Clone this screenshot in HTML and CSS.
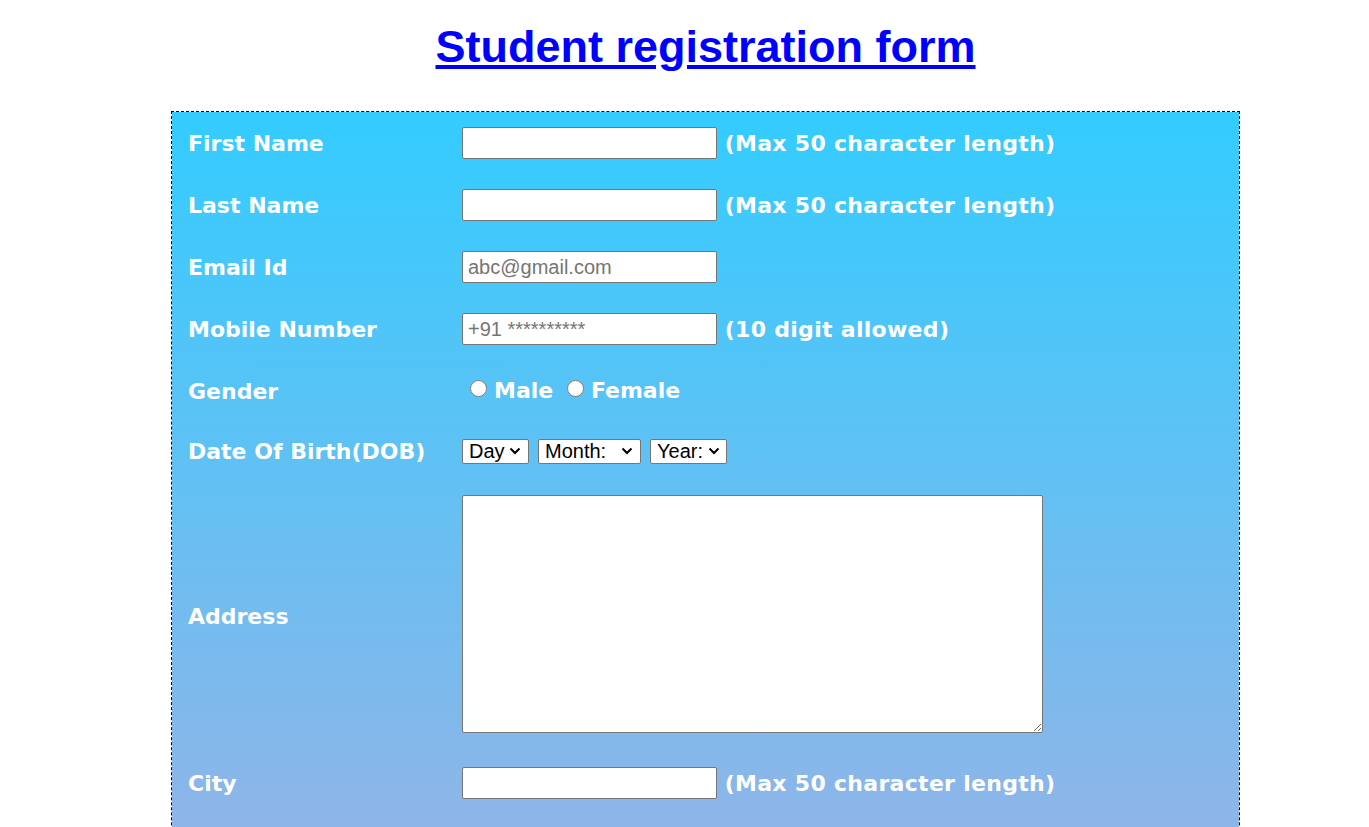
FILE: index.html
```html
<!DOCTYPE html>
<html>
<head>
<meta charset="utf-8">
<title>Student registration form</title>
<link rel="stylesheet" href="styles.css">
</head>
<body>
<div class="page">
  <h1 class="title">Student registration form</h1>
  <table class="form-table">
    <tr>
      <td class="label">First Name</td>
      <td class="field"><input class="text" type="text"> <span class="note">(Max 50 character length)</span></td>
    </tr>
    <tr>
      <td class="label">Last Name</td>
      <td class="field"><input class="text" type="text"> <span class="note">(Max 50 character length)</span></td>
    </tr>
    <tr>
      <td class="label">Email Id</td>
      <td class="field"><input class="text" type="text" placeholder="abc@gmail.com"></td>
    </tr>
    <tr>
      <td class="label">Mobile Number</td>
      <td class="field"><input class="text" type="text" placeholder="+91 **********"> <span class="note">(10 digit allowed)</span></td>
    </tr>
    <tr class="row-choice">
      <td class="label">Gender</td>
      <td class="field"><label class="radio"><input type="radio" name="g">Male</label> <label class="radio radio-2"><input type="radio" name="g">Female</label></td>
    </tr>
    <tr class="row-dob">
      <td class="label">Date Of Birth(DOB)</td>
      <td class="field"><div class="selects">
        <select class="sel sel-day"><option>Day</option></select>
        <select class="sel sel-month"><option>Month:</option></select>
        <select class="sel sel-year"><option>Year:</option></select>
      </div></td>
    </tr>
    <tr>
      <td class="label">Address</td>
      <td class="field"><textarea class="area"></textarea></td>
    </tr>
    <tr>
      <td class="label">City</td>
      <td class="field"><input class="text" type="text"> <span class="note">(Max 50 character length)</span></td>
    </tr>
    <tr>
      <td class="label">Pin Code</td>
      <td class="field"><input class="text" type="text"> <span class="note">(6 digit number)</span></td>
    </tr>
    <tr>
      <td class="label">State</td>
      <td class="field"><input class="text" type="text"> <span class="note">(Max 50 character length)</span></td>
    </tr>
    <tr>
      <td class="label">Country</td>
      <td class="field"><input class="text" type="text"></td>
    </tr>
    <tr class="row-choice">
      <td class="label">Hobbies</td>
      <td class="field"><label class="radio"><input type="checkbox">Drawing</label> <label class="radio radio-2"><input type="checkbox">Singing</label> <label class="radio radio-2"><input type="checkbox">Dancing</label></td>
    </tr>
    <tr class="row-choice">
      <td class="label">Courses Applied For</td>
      <td class="field"><label class="radio"><input type="radio" name="c">BCA</label> <label class="radio radio-2"><input type="radio" name="c">B.Com</label> <label class="radio radio-2"><input type="radio" name="c">B.Sc</label> <label class="radio radio-2"><input type="radio" name="c">B.A</label></td>
    </tr>
    <tr>
      <td class="buttons" colspan="2"><input type="submit" value="Submit"> <input type="reset" value="Reset"></td>
    </tr>
  </table>
</div>
</body>
</html>
```
FILE: styles.css
```css
html, body {
  margin: 0;
  padding: 0;
  background: #ffffff;
}

.page {
  padding-left: 42px;
  padding-bottom: 40px;
}

.title {
  margin: 0;
  padding-top: 21px;
  height: 111px;
  box-sizing: border-box;
  text-align: center;
  font-family: "Liberation Sans", Arial, sans-serif;
  font-size: 45px;
  font-weight: bold;
  color: #0000ff;
  text-decoration: underline;
  line-height: 52px;
}

.form-table {
  width: 1069px;
  margin: 0 auto;
  border: 1px dashed #000000;
  border-spacing: 0;
  background: linear-gradient(#33ccff 0px, #ff99cc 1590px);
  background-repeat: no-repeat;
}

.label {
  width: 259px;
  padding: 15px 0 15px 16px;
  font-family: Verdana, "DejaVu Sans", sans-serif;
  font-size: 22px;
  font-weight: bold;
  color: #ffffff;
  white-space: nowrap;
}

.field {
  padding: 15px 15px;
  font-family: Verdana, "DejaVu Sans", sans-serif;
  font-size: 22px;
  font-weight: bold;
  color: #ffffff;
}

.row-choice .field {
  line-height: 32px;
}

.text {
  width: 255px;
  height: 32px;
  box-sizing: border-box;
  border: 1px solid #767676;
  border-radius: 2px;
  padding: 1px 5px;
  font-family: "Liberation Sans", Arial, sans-serif;
  font-size: 20px;
  vertical-align: middle;
}

.text::placeholder {
  color: #757575;
}

.note {
  vertical-align: middle;
  letter-spacing: 0.3px;
}

.radio input {
  margin: 0 7px 0 8px;
  width: 17px;
  height: 17px;
  vertical-align: 1px;
}

.radio-2 input {
  margin-left: 6px;
}

.selects {
  display: flex;
  align-items: center;
  gap: 9px;
  height: 28px;
}

.sel {
  appearance: none;
  -webkit-appearance: none;
  height: 25px;
  box-sizing: border-box;
  font-family: "Liberation Sans", Arial, sans-serif;
  font-size: 20px;
  line-height: 23px;
  color: #000000;
  border: 1px solid #767676;
  border-radius: 2px;
  background-color: #ffffff;
  background-image: url("data:image/svg+xml,%3Csvg xmlns='http://www.w3.org/2000/svg' width='12' height='8' viewBox='0 0 12 8'%3E%3Cpath d='M1.5 1.5 L6 6 L10.5 1.5' fill='none' stroke='%23000' stroke-width='2'/%3E%3C/svg%3E");
  background-repeat: no-repeat;
  background-position: right 7px center;
  margin: 0;
  padding: 0 0 0 6px;
}

.sel-day {
  width: 67px;
}

.sel-month {
  width: 103px;
}

.sel-year {
  width: 77px;
  background-position: right 6px center;
}

.area {
  display: block;
  width: 581px;
  height: 238px;
  margin-bottom: 4px;
  box-sizing: border-box;
  border: 1px solid #767676;
  border-radius: 2px;
}

.buttons {
  padding: 15px;
  text-align: center;
}
```
